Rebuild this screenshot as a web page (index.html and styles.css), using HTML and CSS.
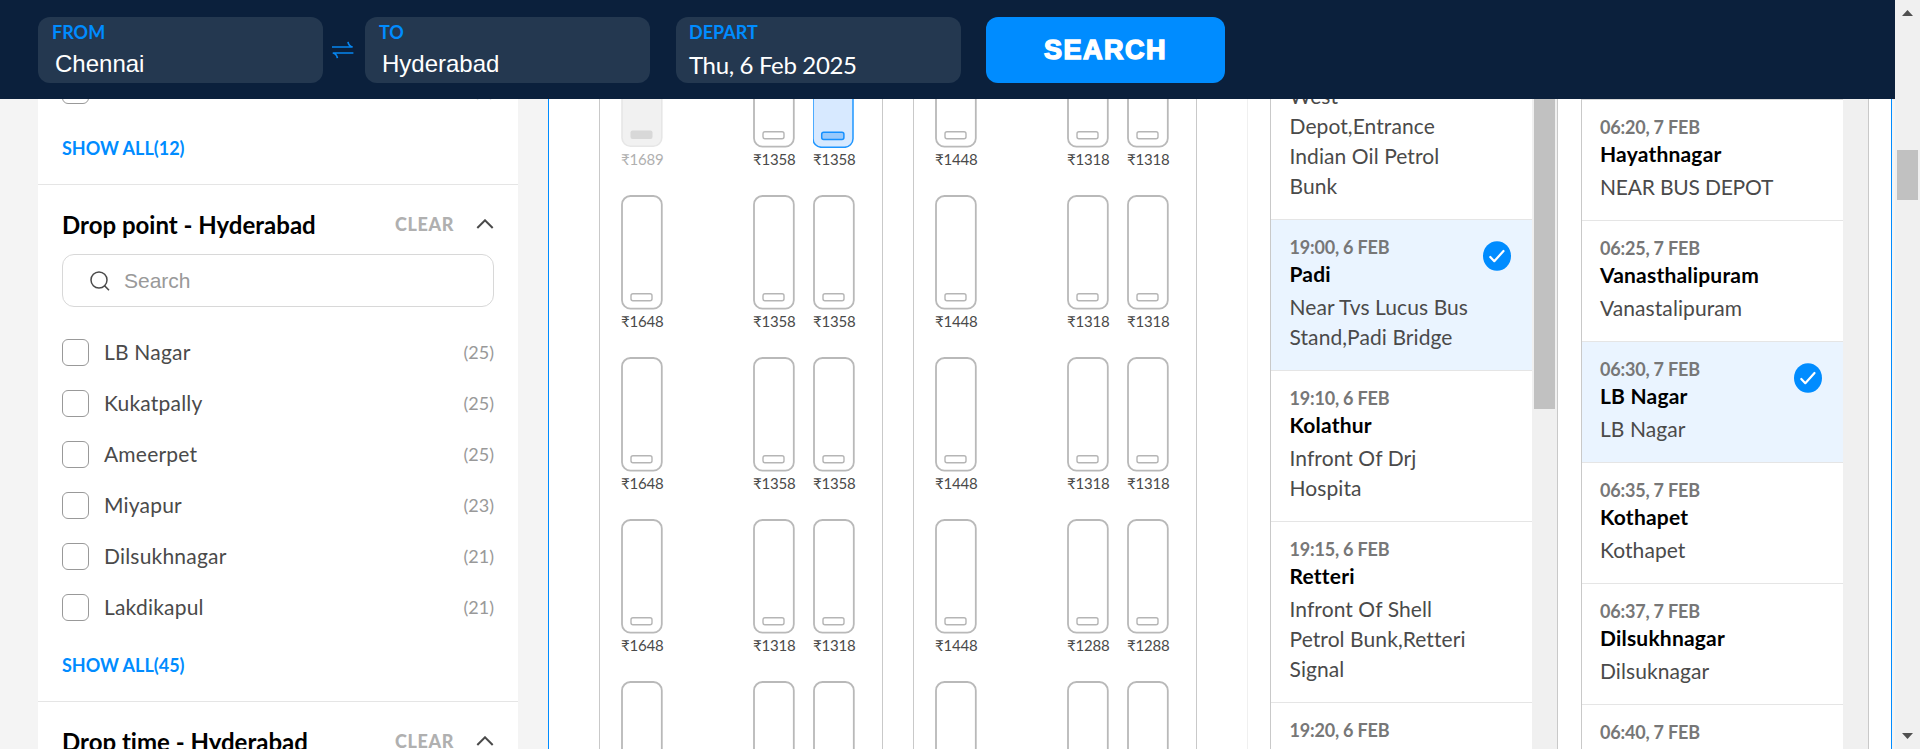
FILE: index.html
```html
<!DOCTYPE html>
<html lang="en">
<head>
<meta charset="utf-8">
<title>Chennai to Hyderabad buses</title>
<link rel="stylesheet" href="styles.css">
</head>
<body>
<svg class="defs" aria-hidden="true">
  <symbol id="seat" viewBox="0 0 42 115">
    <rect x="1" y="1" width="39.8" height="112.7" rx="8.5" fill="#fff" stroke="#b9b9b9" stroke-width="1.8"/>
    <rect x="10" y="98.8" width="21" height="7" rx="2" fill="#fff" stroke="#b5b5b5" stroke-width="1.4"/>
  </symbol>
  <symbol id="seat-off" viewBox="0 0 42 115">
    <rect x="1" y="1" width="39.8" height="112.2" rx="8.5" fill="#f1f1f1" stroke="#e6e6e6" stroke-width="1.6"/>
    <rect x="9.5" y="97.5" width="22" height="8.5" rx="2" fill="#d8d8d8"/>
  </symbol>
  <symbol id="seat-on" viewBox="0 0 42 115">
    <rect x="0" y="1" width="40" height="113.3" rx="8.5" fill="#d7e9ff" stroke="#1f96ff" stroke-width="1.5"/>
    <rect x="8.7" y="99.2" width="22.2" height="7.3" rx="2" fill="#99c9fb" stroke="#1590ff" stroke-width="1.5"/>
  </symbol>
  <symbol id="check" viewBox="0 0 28 30">
    <ellipse cx="14" cy="15" rx="14" ry="14.8" fill="#008cff"/>
    <path d="M7.3 16l4 4.2L20.5 10" fill="none" stroke="#fff" stroke-width="2.2" stroke-linecap="round" stroke-linejoin="round"/>
  </symbol>
  <symbol id="chevron" viewBox="0 0 18 10">
    <path d="M1.3 9L9 1.3 16.7 9" fill="none" stroke="#4a4a4a" stroke-width="2"/>
  </symbol>
</svg>
<div class="window">
  <div class="page">
    <header class="topbar">
      <div class="field"><span class="field-label">FROM</span><span class="field-value">Chennai</span></div>
      <svg class="swap" viewBox="0 0 22 18"><path d="M0 6h20.6q-4-1-4.6-5.2M21.4 12H.8q4 1 4.6 5.2" fill="none" stroke="#0685f0" stroke-width="1.7"/></svg>
      <div class="field"><span class="field-label">TO</span><span class="field-value">Hyderabad</span></div>
      <div class="field depart"><span class="field-label">DEPART</span><span class="field-value date">Thu, 6 Feb 2025</span></div>
      <button class="search-btn">SEARCH</button>
    </header>
    <div class="content">
      <aside class="filters">
        <section class="filter first">
          <div class="option"><span class="box"></span><span class="name"></span><span class="count">(1)</span></div>
          <a class="show-all">SHOW ALL(12)</a>
        </section>
        <section class="filter">
          <div class="filter-head"><h3>Drop point - Hyderabad</h3><span class="clear">CLEAR</span><svg class="chev"><use href="#chevron"/></svg></div>
          <div class="search"><svg viewBox="0 0 20 20"><circle cx="9" cy="9" r="8" fill="none" stroke="#4a4a4a" stroke-width="1.5"/><path d="M14.2 14.4L19 19.2" stroke="#4a4a4a" stroke-width="1.5"/></svg><span>Search</span></div>
          <div class="option"><span class="box"></span><span class="name">LB Nagar</span><span class="count">(25)</span></div>
          <div class="option"><span class="box"></span><span class="name">Kukatpally</span><span class="count">(25)</span></div>
          <div class="option"><span class="box"></span><span class="name">Ameerpet</span><span class="count">(25)</span></div>
          <div class="option"><span class="box"></span><span class="name">Miyapur</span><span class="count">(23)</span></div>
          <div class="option"><span class="box"></span><span class="name">Dilsukhnagar</span><span class="count">(21)</span></div>
          <div class="option"><span class="box"></span><span class="name">Lakdikapul</span><span class="count">(21)</span></div>
          <a class="show-all">SHOW ALL(45)</a>
        </section>
        <section class="filter">
          <div class="filter-head"><h3>Drop time - Hyderabad</h3><span class="clear">CLEAR</span><svg class="chev"><use href="#chevron"/></svg></div>
        </section>
      </aside>
      <main class="bus">
        <div class="seat-map">
          <div class="deck">
            <div class="seat off"><svg><use href="#seat-off"/></svg>₹1689</div><div class="seat"><svg><use href="#seat"/></svg>₹1358</div><div class="seat"><svg><use href="#seat-on"/></svg>₹1358</div>
            <div class="seat"><svg><use href="#seat"/></svg>₹1648</div><div class="seat"><svg><use href="#seat"/></svg>₹1358</div><div class="seat"><svg><use href="#seat"/></svg>₹1358</div>
            <div class="seat"><svg><use href="#seat"/></svg>₹1648</div><div class="seat"><svg><use href="#seat"/></svg>₹1358</div><div class="seat"><svg><use href="#seat"/></svg>₹1358</div>
            <div class="seat"><svg><use href="#seat"/></svg>₹1648</div><div class="seat"><svg><use href="#seat"/></svg>₹1318</div><div class="seat"><svg><use href="#seat"/></svg>₹1318</div>
            <div class="seat"><svg><use href="#seat"/></svg></div><div class="seat"><svg><use href="#seat"/></svg></div><div class="seat"><svg><use href="#seat"/></svg></div>
          </div>
          <div class="deck">
            <div class="seat"><svg><use href="#seat"/></svg>₹1448</div><div class="seat"><svg><use href="#seat"/></svg>₹1318</div><div class="seat"><svg><use href="#seat"/></svg>₹1318</div>
            <div class="seat"><svg><use href="#seat"/></svg>₹1448</div><div class="seat"><svg><use href="#seat"/></svg>₹1318</div><div class="seat"><svg><use href="#seat"/></svg>₹1318</div>
            <div class="seat"><svg><use href="#seat"/></svg>₹1448</div><div class="seat"><svg><use href="#seat"/></svg>₹1318</div><div class="seat"><svg><use href="#seat"/></svg>₹1318</div>
            <div class="seat"><svg><use href="#seat"/></svg>₹1448</div><div class="seat"><svg><use href="#seat"/></svg>₹1288</div><div class="seat"><svg><use href="#seat"/></svg>₹1288</div>
            <div class="seat"><svg><use href="#seat"/></svg></div><div class="seat"><svg><use href="#seat"/></svg></div><div class="seat"><svg><use href="#seat"/></svg></div>
          </div>
        </div>
        <div class="points">
          <div class="stops">
            <div class="stop-list">
              <div class="stop cut"><p>West<br>Depot,Entrance<br>Indian Oil Petrol<br>Bunk</p></div>
              <div class="stop selected"><time>19:00, 6 FEB</time><h4>Padi</h4><p>Near Tvs Lucus Bus Stand,Padi Bridge</p><svg class="tick"><use href="#check"/></svg></div>
              <div class="stop"><time>19:10, 6 FEB</time><h4>Kolathur</h4><p>Infront Of Drj<br>Hospita</p></div>
              <div class="stop"><time>19:15, 6 FEB</time><h4>Retteri</h4><p>Infront Of Shell<br>Petrol Bunk,Retteri<br>Signal</p></div>
              <div class="stop"><time>19:20, 6 FEB</time></div>
            </div>
            <div class="track"><div class="thumb"></div></div>
          </div>
          <div class="stops">
            <div class="stop-list ruled">
              <div class="stop"><time>06:20, 7 FEB</time><h4>Hayathnagar</h4><p class="caps">NEAR BUS DEPOT</p></div>
              <div class="stop"><time>06:25, 7 FEB</time><h4>Vanasthalipuram</h4><p>Vanastalipuram</p></div>
              <div class="stop selected"><time>06:30, 7 FEB</time><h4>LB Nagar</h4><p>LB Nagar</p><svg class="tick"><use href="#check"/></svg></div>
              <div class="stop"><time>06:35, 7 FEB</time><h4>Kothapet</h4><p>Kothapet</p></div>
              <div class="stop"><time>06:37, 7 FEB</time><h4>Dilsukhnagar</h4><p>Dilsuknagar</p></div>
              <div class="stop"><time>06:40, 7 FEB</time></div>
            </div>
            <div class="track"></div>
          </div>
        </div>
      </main>
    </div>
  </div>
  <div class="scrollbar">
    <svg viewBox="0 0 11 6"><path d="M0 6L5.5 0 11 6z" fill="#505050"/></svg>
    <div class="scroll-thumb"></div>
    <svg class="down" viewBox="0 0 11 6"><path d="M0 0L5.5 6 11 0z" fill="#505050"/></svg>
  </div>
</div>
</body>
</html>
```

FILE: styles.css
```css
* { box-sizing: border-box; margin: 0; padding: 0; }
body { font-family: Lato, "Liberation Sans", sans-serif; font-variant-ligatures: none; background: #f4f4f4; color: #4a4a4a; overflow: hidden; }
svg { display: block; flex: none; }
.defs { width: 0; height: 0; position: absolute; }

.window { display: flex; width: 1920px; height: 749px; overflow: hidden; }
.page { width: 1895px; display: flex; flex-direction: column; }

/* Search bar */
.topbar { height: 99px; flex: none; background: #0b203c; display: flex; align-items: flex-start; padding: 17px 0 0 38px; }
.field { width: 285px; height: 66px; border-radius: 12px; background: #243850; padding: 4px 14px; display: flex; flex-direction: column; }
.field-label { color: #008cff; font-size: 18px; font-weight: 700; line-height: 22px; }
.field-value { color: #fff; font: 24px/28px "Liberation Sans", Arial, sans-serif; padding: 7px 0 0 3px; }
.field-value.date { font-family: Lato, sans-serif; padding: 8px 0 0; letter-spacing: -.35px; }
.swap { width: 22px; height: 18px; margin: 24px 11px 0 9px; }
.depart { margin-left: 26px; padding-left: 13px; }
.search-btn { width: 239px; height: 66px; margin-left: 25px; border: 0; border-radius: 12px; background: #008cff; color: #fff; font: 900 27px/66px "Liberation Sans", Arial, sans-serif; letter-spacing: 1.5px; -webkit-text-stroke: 1.5px #fff; }

.content { flex: 1; min-height: 0; display: flex; overflow: hidden; }

/* Filters */
.filters { width: 480px; margin-left: 38px; background: #fff; flex: none; }
.filter { border-bottom: 1px solid #e5e5e5; padding: 0 24px; height: 517px; }
.filter.first { height: 86px; display: flow-root; }
.first .option { margin-top: -34px; }
.filter-head { display: flex; align-items: center; padding-top: 22px; height: 56px; }
.filter-head h3 { flex: 1; font-size: 24px; line-height: 31px; font-weight: 700; color: #000; }
.clear { font-size: 18px; line-height: 22px; font-weight: 900; color: #b0b0b0; margin-right: 22px; letter-spacing: .6px; padding-bottom: 1px; }
.chev { width: 18px; height: 10px; }
.search { height: 53px; border: 1px solid #d8d8d8; border-radius: 12px; margin: 13px 0 20px; padding-left: 27px; display: flex; align-items: center; gap: 14px; font: 21px "Liberation Sans", Arial, sans-serif; color: #999; }
.search svg { width: 20px; height: 20px; }
.option { height: 51px; display: flex; align-items: center; }
.box { width: 27px; height: 27px; border: 1px solid #999; border-radius: 6px; margin-right: 15px; }
.name { flex: 1; font-size: 21px; line-height: 26px; padding-bottom: 2px; letter-spacing: .2px; }
.count { font-size: 18px; line-height: 22px; color: #999; padding-bottom: 1px; }
.show-all { display: block; font-size: 18px; line-height: 22px; font-weight: 700; color: #008cff; padding-top: 21px; }

/* Bus card */
.bus { margin-left: 30px; width: 1344px; background: #fff; border: solid #008cff; border-width: 0 1px; display: flex; overflow: hidden; }
.seat-map { display: flex; gap: 30px; width: 699px; padding-left: 50px; border-right: 1px solid #f0f0f0; }
.deck { width: 284px; flex: none; border: solid #c9c9c9; border-width: 0 1px; padding-left: 21px; display: grid; grid-template-columns: 132px 60px 60px; grid-auto-rows: 162px; margin-top: -66px; align-content: start; }
.seat { width: 42px; font-size: 15px; line-height: 20px; white-space: nowrap; letter-spacing: -.2px; }
.seat svg { width: 42px; height: 115px; margin-bottom: 1px; overflow: visible; }
.seat.off { color: #b0b0b0; }

.points { display: flex; gap: 23px; padding-left: 22px; }
.stops { width: 288px; display: flex; border: solid #c9c9c9; border-width: 0 1px; }
.stop-list { width: 261px; }
.ruled { border-top: 1px solid #d8d8d8; }
.stop { position: relative; border-bottom: 1px solid #e5e5e5; padding: 15px 60px 18px 18.5px; }
.ruled .stop { padding-left: 18px; }
.stop.cut { padding-top: 0; margin-top: -18px; }
.stop.selected { background: #eaf4ff; }
.stop time { display: block; font-size: 18px; line-height: 24px; font-weight: 700; color: #777; white-space: nowrap; letter-spacing: -.2px; }
.stop h4 { font-size: 21px; line-height: 29px; margin-bottom: 4px; font-weight: 700; color: #000; letter-spacing: .2px; }
.stop p { font-size: 21px; line-height: 30px; white-space: nowrap; width: 185px; letter-spacing: .08px; }
.stop p.caps { letter-spacing: -.2px; }
.stop.selected p { white-space: normal; }
.tick { position: absolute; top: 21px; right: 21px; width: 28px; height: 30px; }
.track { width: 25px; background: #f0f0f0; padding: 0 2px; }
.thumb { height: 310px; background: #c1c1c1; }

/* Page scrollbar */
.scrollbar { width: 25px; background: #f0f0f0; display: flex; flex-direction: column; align-items: center; padding: 10px 2px; }
.scrollbar svg { width: 11px; height: 6px; }
.scroll-thumb { width: 21px; height: 50px; background: #c1c1c1; margin-top: 134px; }
.scrollbar .down { margin-top: auto; }
```
